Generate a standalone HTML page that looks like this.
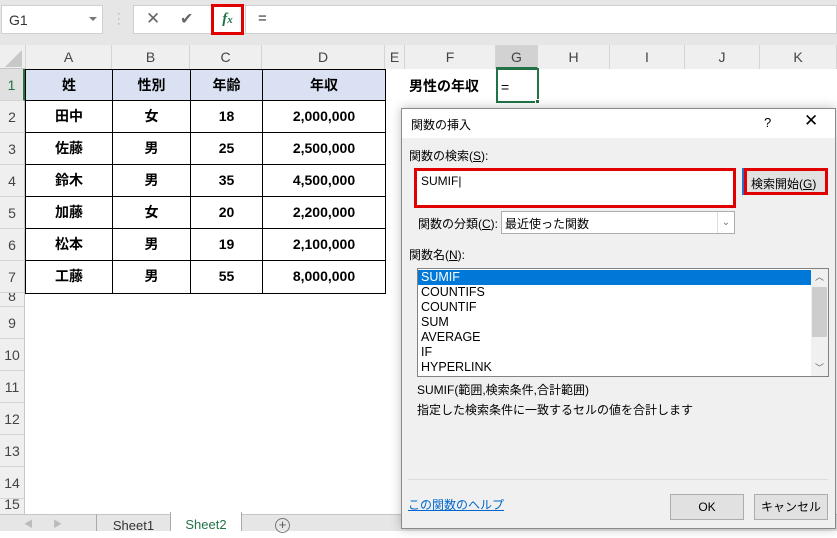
<!DOCTYPE html>
<html><head><meta charset="utf-8"><style>
*{margin:0;padding:0;box-sizing:border-box}
body{width:837px;height:531px;overflow:hidden;background:#fff;font-family:"Liberation Sans","Noto Sans CJK JP",sans-serif;position:relative;color:#000}
.a{position:absolute}
.ch{position:absolute;top:45px;height:24px;border-right:1px solid #d4d4d4;text-align:center;line-height:24px;font-size:14px;color:#444;background:#efefef}
.rh{position:absolute;left:0;width:25px;border-bottom:1px solid #d4d4d4;text-align:center;font-size:14px;color:#444;background:#efefef;border-right:1px solid #c6c6c6}
.c{position:absolute;height:32px;border:1px solid #000;text-align:center;line-height:30px;font-size:14px;font-weight:bold}
.dl{font-size:12px;color:#000;position:absolute}
.li{height:15px;line-height:15px;font-size:12.5px;padding-left:3px}
</style></head><body>
<div class="a" style="left:0;top:0;width:837px;height:45px;background:#e6e6e6"></div>
<div class="a" style="left:1px;top:5px;width:102px;height:29px;background:#fff;border:1px solid #d0d0d0;font-size:14px;line-height:28px;padding-left:7px;color:#333">G1</div>
<div class="a" style="left:89px;top:17px;border-left:4px solid transparent;border-right:4px solid transparent;border-top:4px solid #777"></div>
<div class="a" style="left:117px;top:12px;color:#999;font-size:11px;line-height:5px">·<br>·<br>·</div>
<div class="a" style="left:133px;top:5px;width:704px;height:29px;background:#fff;border:1px solid #d0d0d0"></div>
<div class="a" style="left:146px;top:9px;font-size:17px;color:#666">✕</div>
<div class="a" style="left:180px;top:9px;font-size:16px;color:#666">✔</div>
<div class="a" style="left:211px;top:4px;width:33px;height:31px;border:3px solid #e00000;background:#fff;text-align:center;line-height:24px;font-family:'Liberation Serif',serif;font-style:italic;font-weight:bold;font-size:15px;color:#217346">f<span style="font-size:11px">x</span></div>
<div class="a" style="left:245px;top:5px;width:1px;height:29px;background:#d0d0d0"></div>
<div class="a" style="left:258px;top:10px;font-size:15px;color:#333">=</div>
<div class="a" style="left:0;top:45px;width:837px;height:24px;background:#efefef;border-bottom:1px solid #c6c6c6"></div>
<div class="a" style="left:5px;top:50px;width:0;height:0;border-left:17px solid transparent;border-bottom:17px solid #c8c8c8"></div>
<div class="ch" style="left:25px;width:87px;border-left:1px solid #d4d4d4">A</div>
<div class="ch" style="left:112px;width:78px">B</div>
<div class="ch" style="left:190px;width:72px">C</div>
<div class="ch" style="left:262px;width:123px">D</div>
<div class="ch" style="left:385px;width:20px">E</div>
<div class="ch" style="left:405px;width:91px">F</div>
<div class="ch" style="left:496px;width:42px;background:#d2d2d2;border-bottom:2px solid #217346">G</div>
<div class="ch" style="left:538px;width:72px">H</div>
<div class="ch" style="left:610px;width:75px">I</div>
<div class="ch" style="left:685px;width:75px">J</div>
<div class="ch" style="left:760px;width:77px">K</div>
<div class="rh" style="top:69px;height:32px;line-height:32px;color:#217346;border-right:2px solid #217346;background:#e0e0e0">1</div>
<div class="rh" style="top:101px;height:32px;line-height:32px">2</div>
<div class="rh" style="top:133px;height:32px;line-height:32px">3</div>
<div class="rh" style="top:165px;height:32px;line-height:32px">4</div>
<div class="rh" style="top:197px;height:32px;line-height:32px">5</div>
<div class="rh" style="top:229px;height:32px;line-height:32px">6</div>
<div class="rh" style="top:261px;height:32px;line-height:32px">7</div>
<div class="rh" style="top:293px;height:14px;line-height:6px;overflow:hidden">8</div>
<div class="rh" style="top:307px;height:32px;line-height:32px">9</div>
<div class="rh" style="top:339px;height:32px;line-height:32px">10</div>
<div class="rh" style="top:371px;height:32px;line-height:32px">11</div>
<div class="rh" style="top:403px;height:32px;line-height:32px">12</div>
<div class="rh" style="top:435px;height:32px;line-height:32px">13</div>
<div class="rh" style="top:467px;height:32px;line-height:32px">14</div>
<div class="rh" style="top:499px;height:32px;line-height:10px;overflow:hidden">15</div>
<div class="a" style="left:25px;top:69px;width:360px;height:32px;background:#d9e1f2"></div>
<div class="c" style="left:25px;top:69px;width:88px">姓</div><div class="c" style="left:112px;top:69px;width:79px">性別</div><div class="c" style="left:190px;top:69px;width:73px">年齢</div><div class="c" style="left:262px;top:69px;width:124px">年収</div>
<div class="c" style="left:25px;top:100px;width:88px;height:33px">田中</div><div class="c" style="left:112px;top:100px;width:79px;height:33px">女</div><div class="c" style="left:190px;top:100px;width:73px;height:33px">18</div><div class="c" style="left:262px;top:100px;width:124px;height:33px">2,000,000</div>
<div class="c" style="left:25px;top:132px;width:88px;height:33px">佐藤</div><div class="c" style="left:112px;top:132px;width:79px;height:33px">男</div><div class="c" style="left:190px;top:132px;width:73px;height:33px">25</div><div class="c" style="left:262px;top:132px;width:124px;height:33px">2,500,000</div>
<div class="c" style="left:25px;top:164px;width:88px;height:33px">鈴木</div><div class="c" style="left:112px;top:164px;width:79px;height:33px">男</div><div class="c" style="left:190px;top:164px;width:73px;height:33px">35</div><div class="c" style="left:262px;top:164px;width:124px;height:33px">4,500,000</div>
<div class="c" style="left:25px;top:196px;width:88px;height:33px">加藤</div><div class="c" style="left:112px;top:196px;width:79px;height:33px">女</div><div class="c" style="left:190px;top:196px;width:73px;height:33px">20</div><div class="c" style="left:262px;top:196px;width:124px;height:33px">2,200,000</div>
<div class="c" style="left:25px;top:228px;width:88px;height:33px">松本</div><div class="c" style="left:112px;top:228px;width:79px;height:33px">男</div><div class="c" style="left:190px;top:228px;width:73px;height:33px">19</div><div class="c" style="left:262px;top:228px;width:124px;height:33px">2,100,000</div>
<div class="c" style="left:25px;top:260px;width:88px;height:34px">工藤</div><div class="c" style="left:112px;top:260px;width:79px;height:34px">男</div><div class="c" style="left:190px;top:260px;width:73px;height:34px">55</div><div class="c" style="left:262px;top:260px;width:124px;height:34px">8,000,000</div>
<div class="a" style="left:409px;top:76px;font-size:14px;font-weight:bold">男性の年収</div>
<div class="a" style="left:496px;top:68px;width:43px;height:35px;border:2px solid #217346"></div>
<div class="a" style="left:535px;top:99px;width:5px;height:5px;background:#217346;border:1px solid #fff"></div>
<div class="a" style="left:501px;top:79px;font-size:14px">=</div>
<div class="a" style="left:0;top:514px;width:837px;height:17px;background:#e6e6e6;border-top:1px solid #c6c6c6"></div>
<div class="a" style="left:24px;top:517px;font-size:9px;color:#bbb">◀&nbsp;&nbsp;&nbsp;&nbsp;&nbsp;&nbsp;&nbsp;&nbsp;▶</div>
<div class="a" style="left:96px;top:514px;width:74px;height:17px;border-left:1px solid #aaa;text-align:center;font-size:13px;line-height:24px;color:#333">Sheet1</div>
<div class="a" style="left:170px;top:512px;width:72px;height:19px;background:#fff;border-left:1px solid #aaa;border-right:1px solid #aaa;text-align:center;font-size:13px;line-height:26px;color:#217346">Sheet2</div>
<div class="a" style="left:275px;top:518px;width:15px;height:15px;border:1px solid #777;border-radius:50%;text-align:center;font-size:13px;line-height:12px;color:#555">+</div>
<div class="a" style="left:401px;top:108px;width:435px;height:421px;background:#f0f0f0;border:1px solid #8a8a8a;box-shadow:0 0 10px rgba(0,0,0,.25)"></div>
<div class="a" style="left:402px;top:109px;width:433px;height:29px;background:#fff"></div>
<div class="dl" style="left:411px;top:116px">関数の挿入</div>
<div class="dl" style="left:764px;top:115px;font-size:13px">?</div>
<div class="dl" style="left:804px;top:111px;font-size:17px;font-weight:300">✕</div>
<div class="dl" style="left:409px;top:147px">関数の検索(<u>S</u>):</div>
<div class="a" style="left:414px;top:168px;width:322px;height:40px;background:#fff;border:3px solid #e00000"></div>
<div class="dl" style="left:421px;top:174px">SUMIF<span style="font-weight:100">|</span></div>
<div class="a" style="left:744px;top:168px;width:84px;height:27px;border:3px solid #e00000;background:#e1e1e1;box-shadow:-2px 0 0 #2a6fd0"></div>
<div class="dl" style="left:751px;top:175px">検索開始(<u>G</u>)</div>
<div class="dl" style="left:418px;top:215px">関数の分類(<u>C</u>):</div>
<div class="a" style="left:501px;top:211px;width:234px;height:23px;background:#fff;border:1px solid #adadad"></div>
<div class="dl" style="left:505px;top:215px">最近使った関数</div>
<div class="a" style="left:717px;top:212px;width:17px;height:21px;border-left:1px solid #ddd;font-size:10px;color:#777;text-align:center;line-height:21px">⌄</div>
<div class="dl" style="left:409px;top:246px">関数名(<u>N</u>):</div>
<div class="a" style="left:417px;top:268px;width:412px;height:109px;background:#fff;border:1px solid #828282;overflow:hidden">
<div style="position:absolute;left:0;top:1px;width:393px">
<div class="li" style="background:#0078d7;color:#fff">SUMIF</div>
<div class="li">COUNTIFS</div><div class="li">COUNTIF</div><div class="li">SUM</div><div class="li">AVERAGE</div><div class="li">IF</div><div class="li">HYPERLINK</div></div>
<div style="position:absolute;right:0;top:0;width:17px;height:107px;background:#f0f0f0"></div>
<div style="position:absolute;right:1px;top:18px;width:15px;height:50px;background:#cdcdcd"></div>
<div style="position:absolute;right:4px;top:1px;font-size:9px;color:#606060">︿</div>
<div style="position:absolute;right:4px;top:92px;font-size:9px;color:#606060">﹀</div>
</div>
<div class="dl" style="left:417px;top:381px">SUMIF(範囲,検索条件,合計範囲)</div>
<div class="dl" style="left:417px;top:401px">指定した検索条件に一致するセルの値を合計します</div>
<div class="a" style="left:408px;top:479px;width:420px;height:1px;background:#dcdcdc"></div>
<div class="dl" style="left:408px;top:496px;color:#0066cc;text-decoration:underline">この関数のヘルプ</div>
<div class="a" style="left:670px;top:494px;width:74px;height:26px;background:#e1e1e1;border:1px solid #adadad;font-size:12px;text-align:center;line-height:24px">OK</div>
<div class="a" style="left:754px;top:494px;width:74px;height:26px;background:#e1e1e1;border:1px solid #adadad;font-size:12px;text-align:center;line-height:24px">キャンセル</div>
</body></html>
